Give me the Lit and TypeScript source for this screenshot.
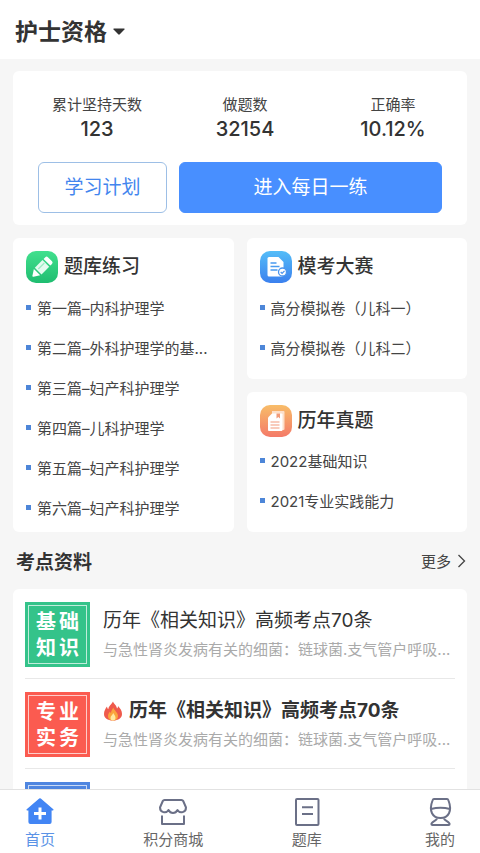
import { LitElement, html, css, svg } from "lit";
import { customElement, property } from "lit/decorators.js";
import { classMap } from "lit/directives/class-map.js";

const badges = {
  pencil: svg`
    <defs><linearGradient id="g" x1="0" y1="0" x2="0" y2="1">
      <stop offset="0" stop-color="#42e08e"/><stop offset="1" stop-color="#1fbd70"/>
    </linearGradient></defs>
    <rect width="32" height="32" rx="10" fill="url(#g)"/>
    <path d="M8.800 16.700 16.500 9l6.700 6.700-7.700 7.700z" fill="#e4fbef"/>
    <path d="M17.600 7.900 19.300 6.200q1.300-1.300 2.600 0l4.100 4.100q1.300 1.300 0 2.600L24.300 14.600z" fill="#fff"/>
    <path d="M7.900 18 14.200 24.300 7.500 25.800q-1.300.2-1.100-1.100z" fill="#fff"/>
    <path d="m12.300 18 6-6" stroke="#9becc3" stroke-width="1.200"/>`,
  exam: svg`
    <defs><linearGradient id="g" x1="0" y1="0" x2="0" y2="1">
      <stop offset="0" stop-color="#54bdf8"/><stop offset="1" stop-color="#3b80ee"/>
    </linearGradient></defs>
    <rect width="32" height="32" rx="10" fill="url(#g)"/>
    <path d="M9 6h9.500L23.500 11V24a1.500 1.500 0 0 1-1.500 1.500H9A1.500 1.500 0 0 1 7.500 24V7.500A1.500 1.500 0 0 1 9 6z" fill="#fff"/>
    <path d="M10.500 12h6M10.500 15.500h9M10.500 19h7" stroke="#4a9bf0" stroke-width="1.300"/>
    <circle cx="22.500" cy="21" r="4" fill="#fff" stroke="#4a94ee" stroke-width="1.300"/>
    <path d="m20.700 21 1.400 1.400 2.400-2.600" fill="none" stroke="#4a94ee" stroke-width="1.200"/>`,
  papers: svg`
    <defs><linearGradient id="g" x1="0" y1="0" x2="0" y2="1">
      <stop offset="0" stop-color="#f8bd69"/><stop offset="1" stop-color="#f47a68"/>
    </linearGradient></defs>
    <rect width="32" height="32" rx="10" fill="url(#g)"/>
    <path d="M12 6h11.500q1 0 1 1v17q0 1-1 1H12z" fill="#fce0cb"/>
    <path d="m12 8.500h9.500q1 0 1 1V25q0 1-1 1H9q-1 0-1-1V12.500z" fill="#fff"/>
    <path d="M16.500 8.500h3.500v5l-1.700-1.500-1.800 1.500z" fill="#f29a78"/>
    <path d="M10.500 17h9M10.500 20h9M10.500 23h9" stroke="#f29a7c" stroke-width="1.200"/>`,
};

const tabs = {
  home: svg`
    <path d="M14.200 1.500q.8-.7 1.600 0L28.300 12.300q.9.900-.4 1.200H26.600V25q0 2-2 2H5.400q-2 0-2-2V13.500H2.100q-1.300-.3-.4-1.200z" fill="#4285f4"/>
    <path d="M15 10.500v12M9 16.500h12" stroke="#fff" stroke-width="3"/>`,
  shop: svg`
    <g fill="none" stroke="#6b7087" stroke-width="2" stroke-linejoin="round">
      <path d="M6.500 3h17q1.200 0 1.700 1L28 10.500c0 5-6 6.500-8.500 2.500-2 4-7 4-9 0C8 17 2 15.500 2 10.500L4.800 4q.5-1 1.700-1z"/>
      <path d="M4 18.500V27h22v-8.500"/>
    </g>`,
  bank: svg`
    <g fill="none" stroke="#6b7087" stroke-width="2">
      <rect x="4" y="2" width="22.500" height="26" rx="1"/>
      <path d="M10 10.300h11M10 17h11"/>
    </g>`,
  mine: svg`
    <g fill="none" stroke="#6b7087" stroke-width="2" stroke-linejoin="round">
      <path d="M9 2h13q1 0 1.500 1.500C27.500 14 23.500 21 15.500 21S3.500 14 7.500 3.500Q8 2 9 2z"/>
      <path d="M6 12q9.500-2.500 19 0"/>
      <path d="M12 21.500c-.5 2-4 2.500-5.500 5q-.3 1.500 1 1.500h16q1.300 0 1-1.500c-1.500-2.500-5-3-5.500-5"/>
    </g>`,
};

type BadgeName = keyof typeof badges;
type TabName = keyof typeof tabs;

@customElement("topic-card")
export class TopicCard extends LitElement {
  @property() heading = "";
  @property() icon: BadgeName = "pencil";
  @property({ attribute: false }) items: string[] = [];

  static styles = css`
    :host {
      display: block;
      box-sizing: border-box;
      min-width: 0;
      padding: 13px 13px 5px;
      background: #fff;
      border-radius: 6px;
    }
    .head {
      display: flex;
      align-items: center;
      gap: 6px;
      height: 32px;
    }
    .badge {
      flex: none;
      width: 32px;
      height: 32px;
    }
    .title {
      margin: 0;
      font-size: 19px;
      font-weight: 500;
      line-height: 32px;
      color: #333;
    }
    .list {
      margin: 4px 0 0;
      padding: 0;
      list-style: none;
    }
    .link {
      display: flex;
      align-items: center;
      gap: 6px;
      height: 40px;
      font-size: 15px;
      white-space: nowrap;
      color: #444;
      text-decoration: none;
    }
    .link::before {
      content: "";
      flex: none;
      width: 5px;
      height: 5px;
      background: #4d86d8;
    }
  `;

  render() {
    return html`
      <div class="head">
        <svg class="badge" viewBox="0 0 32 32" aria-hidden="true">${badges[this.icon]}</svg>
        <h2 class="title">${this.heading}</h2>
      </div>
      <ul class="list">
        ${this.items.map((t) => html`<li><a class="link" href="#">${t}</a></li>`)}
      </ul>
    `;
  }
}

interface Article {
  tag: string[];
  tone: "green" | "red" | "blue";
  hot?: boolean;
  title?: string;
  desc?: string;
}

@customElement("app-root")
export class AppRoot extends LitElement {
  private stats = [
    ["累计坚持天数", "123"],
    ["做题数", "32154"],
    ["正确率", "10.12%"],
  ];

  private articles: Article[] = [
    {
      tag: ["基础", "知识"],
      tone: "green",
      title: "历年《相关知识》高频考点70条",
      desc: "与急性肾炎发病有关的细菌：链球菌.支气管户呼吸...",
    },
    {
      tag: ["专业", "实务"],
      tone: "red",
      hot: true,
      title: "历年《相关知识》高频考点70条",
      desc: "与急性肾炎发病有关的细菌：链球菌.支气管户呼吸...",
    },
    { tag: [], tone: "blue" },
  ];

  private nav: { label: string; icon: TabName }[] = [
    { label: "首页", icon: "home" },
    { label: "积分商城", icon: "shop" },
    { label: "题库", icon: "bank" },
    { label: "我的", icon: "mine" },
  ];

  static styles = css`
    :host {
      display: flex;
      flex-direction: column;
      height: 100vh;
      background: #f6f6f6;
      color: #333;
      font-family: Inter, "Noto Sans CJK SC", sans-serif;
    }
    .top {
      flex: none;
      display: flex;
      align-items: center;
      height: 59px;
      padding: 4px 15px 0;
      box-sizing: border-box;
      background: #fff;
    }
    .subject {
      display: flex;
      align-items: center;
      gap: 6px;
      padding: 0;
      border: 0;
      background: none;
      font: 700 23px/32px Inter, "Noto Sans CJK SC", sans-serif;
      color: #333;
    }
    .caret {
      width: 12px;
      height: 7px;
    }
    .page {
      flex: 1;
      min-height: 0;
      overflow-y: auto;
      scrollbar-width: none;
      padding: 12px 13px;
    }
    .card {
      background: #fff;
      border-radius: 6px;
    }
    .summary {
      padding: 22px 0 12px;
    }
    .stats {
      display: grid;
      grid-template-columns: repeat(3, 1fr);
      margin: 0;
      padding-left: 10px;
      text-align: center;
    }
    .label {
      font-size: 15px;
      line-height: 24px;
      color: #444;
    }
    .value {
      margin: 0;
      font-size: 20px;
      font-weight: 500;
      line-height: 24px;
    }
    .actions {
      display: grid;
      grid-template-columns: 129fr 263fr;
      gap: 12px;
      padding: 21px 25px 0;
    }
    .btn {
      height: 51px;
      padding: 0;
      border: 1px solid #488fff;
      border-radius: 6px;
      background: #488fff;
      font: 400 19px/24px Inter, "Noto Sans CJK SC", sans-serif;
      color: #fff;
    }
    .btn.outline {
      border-color: #9dbfe6;
      background: #fff;
      color: #4285ee;
    }
    .topics {
      display: grid;
      grid-template-columns: 1fr 1fr;
      gap: 13px;
      margin-top: 13px;
    }
    .column {
      display: grid;
      gap: 13px;
      min-width: 0;
    }
    .section {
      display: flex;
      align-items: center;
      justify-content: space-between;
      height: 57px;
      padding: 0 1px 0 3px;
    }
    .name {
      margin: 0;
      font-size: 19px;
      font-weight: 700;
    }
    .more {
      display: flex;
      align-items: center;
      gap: 6px;
      font-size: 15px;
      color: #444;
      text-decoration: none;
    }
    .chevron {
      width: 9px;
      height: 14px;
    }
    .feed {
      padding: 0 12px;
    }
    .article {
      display: flex;
      gap: 13px;
      padding: 13px 0 11px;
      border-bottom: 1px solid #e8e8e8;
      color: #333;
      text-decoration: none;
    }
    .thumb {
      flex: none;
      display: flex;
      flex-direction: column;
      justify-content: center;
      box-sizing: border-box;
      width: 65px;
      height: 65px;
      padding-left: 3px;
      outline: 1px solid #ffffffb0;
      outline-offset: -4px;
      text-align: center;
      font-size: 20px;
      font-weight: 700;
      line-height: 26px;
      letter-spacing: 3px;
      color: #fff;
    }
    .green {
      background: #34c38a;
    }
    .red {
      background: #fb5b50;
    }
    .blue {
      background: #4f86e0;
    }
    .body {
      flex: 1;
      min-width: 0;
      padding-top: 5px;
    }
    .line {
      display: flex;
      align-items: center;
      gap: 6px;
      margin: 0;
      font-size: 19px;
      font-weight: 400;
      line-height: 28px;
      white-space: nowrap;
    }
    .line.hot {
      font-weight: 700;
    }
    .fire {
      width: 20px;
      height: 20px;
    }
    .desc {
      margin: 3px 0 0;
      overflow: hidden;
      font-size: 15px;
      line-height: 24px;
      white-space: nowrap;
      color: #aaa;
    }
    .tabs {
      flex: none;
      display: flex;
      justify-content: space-between;
      box-sizing: border-box;
      height: 64px;
      padding: 7px 9px 0;
      border-top: 1px solid #e2e2e2;
      background: #fff;
    }
    .tab {
      display: flex;
      flex-direction: column;
      align-items: center;
      gap: 1px;
      width: 62px;
      font-size: 15px;
      line-height: 24px;
      white-space: nowrap;
      color: #666;
      text-decoration: none;
    }
    .tab.active {
      color: #5b93e6;
    }
    .glyph {
      width: 30px;
      height: 30px;
    }
  `;

  private renderArticle(a: Article) {
    return html`
      <a class="article" href="#">
        <div class="thumb ${a.tone}">${a.tag.map((t) => html`<span>${t}</span>`)}</div>
        ${a.title
          ? html`<div class="body">
              <h3 class=${classMap({ line: true, hot: !!a.hot })}>
                ${a.hot
                  ? html`<svg class="fire" viewBox="0 0 20 20" aria-hidden="true">
                      <path d="M10 .5c.5 2 3.500 3.500 4 7 .8-.5 1-1.500 1-2.500 2.500 2.500 4 5 4 8 0 4-3.500 6.500-9 6.500S1 17 1 13c0-3 1.500-5.500 3-7.500.2 1.500.6 2.300 1.300 2.800C5.500 5 8.500 3.500 10 .5z" fill="#ef5a4c"/>
                      <path d="M10.300 6.500c.5 2.500 4.700 5 4.700 8.500 0 3-2 4.500-5 4.500S5 18 5 15.200c0-2 1-3.500 2-4.700.3 1 .6 1.300 1 1.500.2-2.500 1.600-3.500 2.300-5.500z" fill="#fba43c"/>
                      <path d="M10.300 12c.3 1.500 2.200 2.500 2.200 4.700 0 1.800-1 2.800-2.500 2.800s-2.500-1-2.500-2.600c0-2 2.200-2.900 2.800-4.900z" fill="#ffe9a0"/>
                    </svg>`
                  : null}<span>${a.title}</span>
              </h3>
              <p class="desc">${a.desc}</p>
            </div>`
          : null}
      </a>
    `;
  }

  render() {
    return html`
      <header class="top">
        <button class="subject" type="button">
          护士资格
          <svg class="caret" viewBox="0 0 12 7" aria-hidden="true">
            <path d="M1 .5h10q1 .2.400 1L6.800 6.300q-.8.700-1.600 0L.6 1.500Q0 .7 1 .5z" fill="#333"/>
          </svg>
        </button>
      </header>
      <main class="page">
        <section class="card summary">
          <dl class="stats">
            ${this.stats.map(
              ([k, v]) => html`<div><dt class="label">${k}</dt><dd class="value">${v}</dd></div>`
            )}
          </dl>
          <div class="actions">
            <button class="btn outline" type="button">学习计划</button>
            <button class="btn" type="button">进入每日一练</button>
          </div>
        </section>
        <div class="topics">
          <topic-card
            heading="题库练习"
            icon="pencil"
            .items=${[
              "第一篇–内科护理学",
              "第二篇–外科护理学的基...",
              "第三篇–妇产科护理学",
              "第四篇–儿科护理学",
              "第五篇–妇产科护理学",
              "第六篇–妇产科护理学",
            ]}
          ></topic-card>
          <div class="column">
            <topic-card
              heading="模考大赛"
              icon="exam"
              .items=${["高分模拟卷（儿科一）", "高分模拟卷（儿科二）"]}
            ></topic-card>
            <topic-card
              heading="历年真题"
              icon="papers"
              .items=${["2022基础知识", "2021专业实践能力"]}
            ></topic-card>
          </div>
        </div>
        <div class="section">
          <h2 class="name">考点资料</h2>
          <a class="more" href="#">
            更多
            <svg class="chevron" viewBox="0 0 9 14" aria-hidden="true">
              <path d="m1.500 1 6 6-6 6" fill="none" stroke="#444" stroke-width="1.300"/>
            </svg>
          </a>
        </div>
        <section class="card feed">${this.articles.map((a) => this.renderArticle(a))}</section>
      </main>
      <nav class="tabs">
        ${this.nav.map(
          (t, i) => html`
            <a class=${classMap({ tab: true, active: i === 0 })} href="#">
              <svg class="glyph" viewBox="0 0 30 30" aria-hidden="true">${tabs[t.icon]}</svg>
              ${t.label}
            </a>
          `
        )}
      </nav>
    `;
  }
}
